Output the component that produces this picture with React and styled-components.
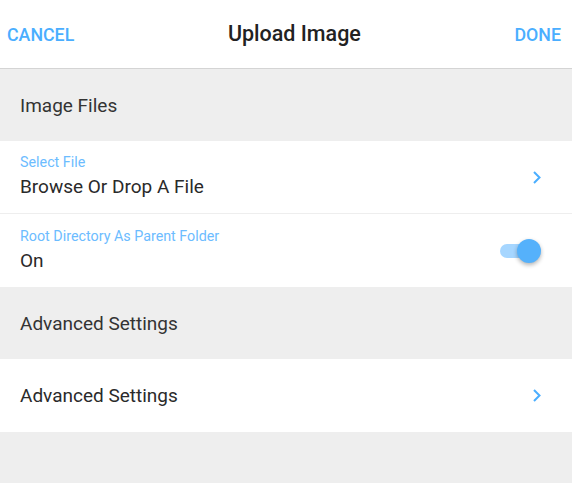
import React, { useState } from 'react';
import styled, { createGlobalStyle } from 'styled-components';

const Global = createGlobalStyle`
  body {
    margin: 0;
    background: #eeeeee;
    font-family: Roboto, "Liberation Sans", sans-serif;
  }
`;

const Page = styled.div`
  width: 572px;
  min-height: 483px;
  background: #eeeeee;
`;

const Header = styled.div`
  height: 68px;
  background: #fff;
  border-bottom: 1px solid #d4d4d4;
  display: flex;
  align-items: center;
  justify-content: space-between;
  padding: 0 11px 0 7px;
`;

const HeaderButton = styled.button`
  border: 0;
  background: none;
  padding: 0;
  font-family: inherit;
  font-size: 17.8px;
  font-weight: 500;
  color: #4aaeff;
  cursor: pointer;
`;

const Title = styled.h1`
  margin: 0 0 1px;
  font-size: 21.5px;
  font-weight: 500;
  color: #222;
`;

const SectionHeader = styled.div`
  height: 72px;
  display: flex;
  align-items: center;
  padding-left: 20px;
  font-size: 19px;
  color: #333;
`;

const Row = styled.div`
  height: ${(p) => (p.$divider ? '72px' : '73px')};
  background: #fff;
  display: flex;
  align-items: center;
  padding: 0 31px 0 20px;
  border-bottom: ${(p) => (p.$divider ? '1px solid #eeeeee' : 'none')};
  cursor: pointer;
`;

const RowText = styled.div`
  flex: 1;
  display: flex;
  flex-direction: column;
  padding-bottom: ${(p) => (p.$labelled ? '2px' : '0')};
`;

const Label = styled.span`
  font-size: 14.3px;
  color: #6cbcff;
  margin-bottom: 5px;
`;

const Value = styled.span`
  font-size: 19px;
  color: #2a2a2a;
`;

const Track = styled.div`
  position: relative;
  width: 36px;
  height: 14px;
  border-radius: 7px;
  margin-right: 5px;
  background: ${(p) => (p.$on ? '#a6d6ff' : '#cfcfcf')};
`;

const Thumb = styled.div`
  position: absolute;
  top: -5px;
  left: ${(p) => (p.$on ? '17px' : '-5px')};
  width: 24px;
  height: 24px;
  border-radius: 50%;
  background: ${(p) => (p.$on ? '#55b1fb' : '#f5f5f5')};
  box-shadow: 0 2px 4px rgba(0, 0, 0, 0.3);
`;

const Chevron = () => (
  <svg width="8" height="13" viewBox="0 0 8 13">
    <path d="M1 1 L6.5 6.5 L1 12" fill="none" stroke="#4aaeff" strokeWidth="2" />
  </svg>
);

export default function App() {
  const [on, setOn] = useState(true);
  return (
    <Page>
      <Global />
      <Header>
        <HeaderButton>CANCEL</HeaderButton>
        <Title>Upload Image</Title>
        <HeaderButton>DONE</HeaderButton>
      </Header>
      <SectionHeader>Image Files</SectionHeader>
      <Row $divider>
        <RowText $labelled>
          <Label>Select File</Label>
          <Value>Browse Or Drop A File</Value>
        </RowText>
        <Chevron />
      </Row>
      <Row onClick={() => setOn(!on)}>
        <RowText $labelled>
          <Label>Root Directory As Parent Folder</Label>
          <Value>{on ? 'On' : 'Off'}</Value>
        </RowText>
        <Track $on={on}>
          <Thumb $on={on} />
        </Track>
      </Row>
      <SectionHeader>Advanced Settings</SectionHeader>
      <Row>
        <RowText>
          <Value>Advanced Settings</Value>
        </RowText>
        <Chevron />
      </Row>
    </Page>
  );
}
